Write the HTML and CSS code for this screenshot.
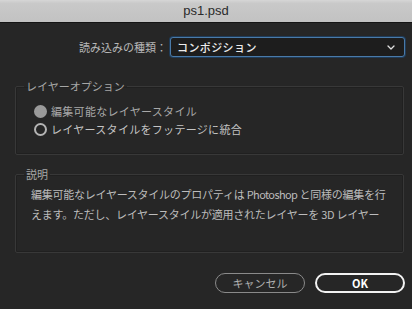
FILE: index.html
```html
<!DOCTYPE html>
<html lang="ja">
<head>
    <meta charset="UTF-8">
    <meta name="viewport" content="width=device-width, initial-scale=1.0">
    <title>ps1.psd</title>
    <link rel="stylesheet" href="styles.css">
</head>
<body>
    <div class="titlebar">ps1.psd</div>

    <div class="dialog">
        <!-- Import type -->
        <div class="import-row">
            <label for="importType">読み込みの種類：</label>
            <div class="select" id="importType">
                <span>コンポジション</span>
                <svg class="chevron" width="8" height="5" viewBox="0 0 8 5">
                    <path d="M1 1 L4 4 L7 1" fill="none" stroke="#e0e0e0" stroke-width="1.3" stroke-linecap="round" stroke-linejoin="round"/>
                </svg>
            </div>
        </div>

        <!-- Layer options -->
        <fieldset class="group options">
            <legend>レイヤーオプション</legend>
            <div class="radio-row dim">
                <span class="radio checked"></span>
                <span>編集可能なレイヤースタイル</span>
            </div>
            <div class="radio-row">
                <span class="radio"></span>
                <span>レイヤースタイルをフッテージに統合</span>
            </div>
        </fieldset>

        <!-- Description -->
        <fieldset class="group description">
            <legend>説明</legend>
            <p>編集可能なレイヤースタイルのプロパティは <span class="latin">Photoshop</span> と同様の編集を行<br>えます。ただし、レイヤースタイルが適用されたレイヤーを 3D レイヤー</p>
        </fieldset>

        <div class="buttons">
            <button class="btn cancel">キャンセル</button>
            <button class="btn ok">OK</button>
        </div>
    </div>
</body>
</html>
```

FILE: styles.css
```css
body {
    margin: 0;
    width: 412px;
    height: 309px;
    overflow: hidden;
    background: #262626;
    font-family: "Noto Sans CJK JP", "Liberation Sans", sans-serif;
    font-size: 11px;
    color: #b4b4b4;
}
.titlebar {
    height: 22px;
    line-height: 22px;
    text-align: center;
    background: linear-gradient(#d6d6d6 0%, #c9c9c9 15%, #c2c2c2 100%);
    border-bottom: 1px solid #141414;
    font-family: "Liberation Sans", Arial, sans-serif;
    font-size: 13px;
    color: #2a2a2a;
}
.dialog {
    padding: 14px 7px 0 15px;
}
.import-row {
    display: flex;
    justify-content: flex-end;
    align-items: center;
    gap: 3px;
}
.import-row label {
    color: #b8b8b8;
}
.select {
    width: 218px;
    height: 18px;
    display: flex;
    align-items: center;
    justify-content: space-between;
    padding: 0 9px 0 6px;
    box-sizing: content-box;
    background: #1d1d1d;
    border: 1px solid #4a7aa8;
    box-shadow: 0 0 0 1px #1f3b58;
    border-radius: 3px;
    color: #ececec;
    font-weight: 500;
    letter-spacing: 0.4px;
}
.chevron {
    margin-top: 1px;
}
.group {
    margin: 22px 1px 0 0;
    border: 1px solid #383838;
    box-shadow: inset 0 0 0 1px #202020;
    border-radius: 2px;
    padding: 9px 0 16px 18px;
}
.group legend {
    padding: 0 2px;
    margin-left: -10px;
    line-height: 14px;
    color: #a6a6a6;
}
.radio-row {
    height: 18px;
    display: flex;
    align-items: center;
    gap: 4px;
    color: #c4c4c4;
    letter-spacing: 0.3px;
}
.radio-row.dim {
    color: #a8a8a8;
}
.radio {
    width: 9px;
    height: 9px;
    border: 2px solid #b4b4b4;
    border-radius: 50%;
}
.radio.checked {
    background: #9a9a9a;
    border-color: #9a9a9a;
}
.description {
    margin-top: 12px;
    padding: 3px 0 28px 15px;
}
.description legend {
    margin-left: -7px;
}
.description p {
    margin: 0;
    line-height: 20px;
    white-space: nowrap;
    color: #bcbcbc;
    letter-spacing: -0.25px;
}
.description .latin {
    letter-spacing: -0.6px;
}
.buttons {
    display: flex;
    justify-content: flex-end;
    gap: 10px;
    margin-top: 20px;
}
.btn {
    width: 90px;
    height: 20px;
    border-radius: 10px;
    background: transparent;
    font-family: "Noto Sans CJK JP", "Liberation Sans", sans-serif;
    font-size: 11px;
    padding: 0;
    line-height: 1;
}
.cancel {
    border: 1.5px solid #8a8a8a;
    color: #b0b0b0;
}
.ok {
    border: 2px solid #f2f2f2;
    color: #ffffff;
    font-weight: bold;
}
```
